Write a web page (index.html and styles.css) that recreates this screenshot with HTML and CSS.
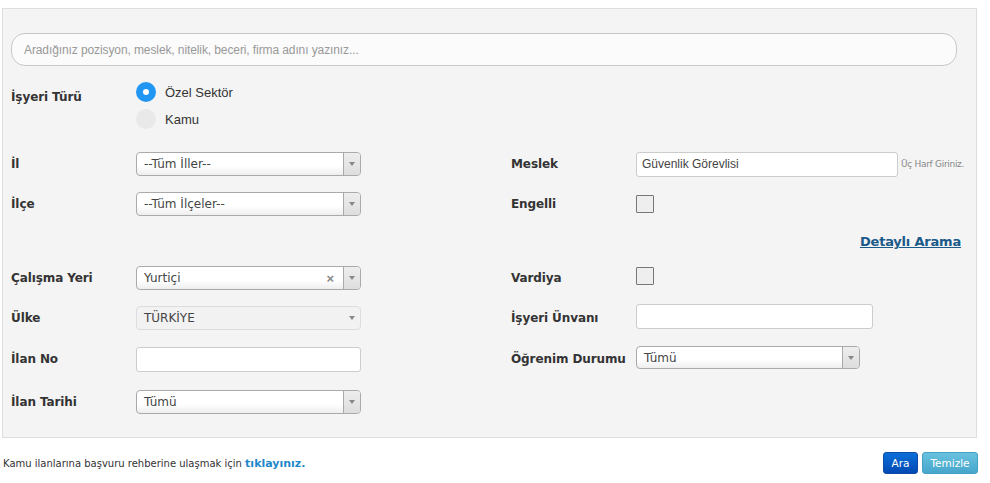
FILE: index.html
```html
<!DOCTYPE html>
<html lang="tr">
<head>
<meta charset="utf-8">
<link rel="stylesheet" href="styles.css">
</head>
<body>
<div class="page">
  <div class="panel">
    <input class="search" type="text" placeholder="Aradığınız pozisyon, meslek, nitelik, beceri, firma adını yazınız...">
    <div class="type-row">
      <div class="label">İşyeri Türü</div>
      <div class="radios">
        <div class="radio-item"><span class="radio checked"></span><span>Özel Sektör</span></div>
        <div class="radio-item"><span class="radio"></span><span>Kamu</span></div>
      </div>
    </div>
    <div class="form">
      <div class="label r1 c1">İl</div>
      <div class="select r1 c2"><span class="val">--Tüm İller--</span><span class="arrow"><i></i></span></div>
      <div class="label r1 c3">Meslek</div>
      <div class="r1 c4 meslek"><div class="input w262"><span class="val dark">Güvenlik Görevlisi</span></div><span class="hint">Üç Harf Giriniz.</span></div>

      <div class="label r2 c1">İlçe</div>
      <div class="select r2 c2"><span class="val">--Tüm İlçeler--</span><span class="arrow"><i></i></span></div>
      <div class="label r2 c3">Engelli</div>
      <div class="r2 c4"><span class="check"></span></div>

      <div class="r3 detail"><a href="#">Detaylı Arama</a></div>

      <div class="label r4 c1">Çalışma Yeri</div>
      <div class="select r4 c2"><span class="val">Yurtiçi</span><span class="clear">×</span><span class="arrow"><i></i></span></div>
      <div class="label r4 c3">Vardiya</div>
      <div class="r4 c4 up"><span class="check"></span></div>

      <div class="label r5 c1">Ülke</div>
      <div class="select disabled r5 c2"><span class="val">TÜRKİYE</span><span class="arrow"><i></i></span></div>
      <div class="label r5 c3">İşyeri Ünvanı</div>
      <div class="r5 c4 up2"><div class="input w237"></div></div>

      <div class="label r6 c1">İlan No</div>
      <div class="r6 c2"><div class="input w225"></div></div>
      <div class="label r6 c3">Öğrenim Durumu</div>
      <div class="select w224 r6 c4 up2"><span class="val">Tümü</span><span class="arrow"><i></i></span></div>

      <div class="label r7 c1">İlan Tarihi</div>
      <div class="select r7 c2"><span class="val">Tümü</span><span class="arrow"><i></i></span></div>
    </div>
  </div>
  <div class="footer">
    <p class="note">Kamu ilanlarına başvuru rehberine ulaşmak için <a href="#">tıklayınız.</a></p>
    <div class="buttons">
      <button class="btn primary">Ara</button>
      <button class="btn info">Temizle</button>
    </div>
  </div>
</div>
</body>
</html>
```
FILE: styles.css
```css
html, body { margin: 0; padding: 0; }
body {
  width: 990px;
  height: 483px;
  overflow: hidden;
  background: #ffffff;
  font-family: "Liberation Sans", Arial, sans-serif;
  color: #333;
}
.page { padding: 8px 0 0 2px; }
.panel {
  box-sizing: border-box;
  width: 975px;
  height: 430px;
  background: #f4f4f4;
  border: 1px solid #dedede;
  padding: 24px 0 0 8px;
}
.search {
  display: block;
  box-sizing: border-box;
  width: 946px;
  height: 33px;
  border: 1px solid #c8c8c8;
  border-radius: 14px;
  background: #fbfbfb;
  padding: 0 12px;
  font-family: "Liberation Sans", Arial, sans-serif;
  font-size: 12px;
  letter-spacing: -0.1px;
  color: #555;
  outline: none;
}
.search::placeholder { color: #999; }

.label {
  font-family: "DejaVu Sans", Verdana, sans-serif;
  font-weight: bold;
  font-size: 12px;
  color: #333;
  letter-spacing: -0.1px;
}
.type-row {
  display: flex;
  margin-top: 16px;
}
.type-row .label { width: 125px; padding-top: 8px; }
.radios { display: flex; flex-direction: column; gap: 7px; }
.radio-item {
  display: flex;
  align-items: center;
  gap: 9px;
  font-size: 13px;
  color: #333;
}
.radio {
  box-sizing: border-box;
  width: 20px;
  height: 20px;
  border-radius: 50%;
  background: #e9e9e9;
}
.radio.checked {
  border: 7px solid #2196f3;
  background-color: #fff;
}

.form {
  display: grid;
  grid-template-columns: 125px 375px 125px 340px;
  grid-template-rows: 40px 39px 36px 38px 41px 42px 43px;
  align-items: center;
  margin-top: 15px;
}
.r1 { grid-row: 1; } .r2 { grid-row: 2; } .r3 { grid-row: 3; } .r4 { grid-row: 4; }
.r5 { grid-row: 5; } .r6 { grid-row: 6; } .r7 { grid-row: 7; }
.c1 { grid-column: 1; } .c2 { grid-column: 2; } .c3 { grid-column: 3; } .c4 { grid-column: 4; }
.up { margin-top: -4px; }
.up2 { margin-top: -3px; }

.select {
  position: relative;
  box-sizing: border-box;
  width: 225px;
  height: 24px;
  border: 1px solid #aaa;
  border-radius: 4px;
  background: linear-gradient(to bottom, #fff 0%, #fff 60%, #eee 100%);
  display: flex;
  align-items: center;
  font-family: "DejaVu Sans", Verdana, sans-serif;
  font-size: 12px;
  color: #444;
}
.select.w224 { width: 224px; height: 23px; }
.select .val { padding-left: 7px; flex: 1; letter-spacing: 0; }
.select .arrow {
  width: 16px;
  align-self: stretch;
  border-left: 1px solid #aaa;
  border-radius: 0 3px 3px 0;
  background: linear-gradient(to bottom, #eee 0%, #ddd 100%);
  display: flex;
  align-items: center;
  justify-content: center;
}
.select .arrow i {
  width: 0; height: 0;
  border-left: 3px solid transparent;
  border-right: 3px solid transparent;
  border-top: 4px solid #888;
}
.select .clear { font-size: 13px; color: #888; margin-right: 9px; font-family: "Liberation Sans", Arial, sans-serif; font-weight: bold; }
.select.disabled {
  border-color: #ddd;
  background: #f2f2f2;
  color: #444;
}
.select.disabled .arrow { border-left: none; background: none; }

.input {
  box-sizing: border-box;
  height: 25px;
  border: 1px solid #ccc;
  border-radius: 3px;
  background: #fff;
  display: flex;
  align-items: center;
}
.w262 { width: 262px; }
.w237 { width: 237px; }
.w225 { width: 225px; }
.input .val { padding-left: 5px; font-size: 12px; color: #444; }
.meslek { display: flex; align-items: center; gap: 3px; }
.hint { font-size: 9px; color: #888; font-family: "DejaVu Sans", Verdana, sans-serif; letter-spacing: -0.3px; }
.check {
  display: block;
  box-sizing: border-box;
  width: 18px;
  height: 18px;
  border: 1px solid #777;
  border-radius: 1px;
  background: #eee;
}
.detail {
  grid-column: 3 / 5;
  justify-self: end;
  margin-right: 15px;
}
.detail a {
  font-family: "DejaVu Sans", Verdana, sans-serif;
  font-weight: bold;
  font-size: 13px;
  color: #1a5a8a;
  text-decoration: underline;
  letter-spacing: -0.2px;
}

.footer {
  display: flex;
  align-items: center;
  justify-content: space-between;
  width: 975px;
  margin-left: 1px;
  height: 46px;
  padding-top: 4px;
  box-sizing: border-box;
}
.note {
  margin: 0;
  font-family: "DejaVu Sans", Verdana, sans-serif;
  font-size: 10px;
  color: #333;
  letter-spacing: 0;
}
.note a {
  color: #1f88c8;
  font-weight: bold;
  font-size: 11px;
  letter-spacing: 0;
  text-decoration: none;
}
.buttons { display: flex; gap: 4px; }
.btn {
  height: 22px;
  border-radius: 3px;
  font-family: "DejaVu Sans", Verdana, sans-serif;
  font-size: 10.5px;
  color: #fff;
  padding: 0;
  cursor: pointer;
}
.btn.primary {
  width: 35px;
  background: linear-gradient(to bottom, #0b6fd8 0%, #0049b4 100%);
  border: 1px solid #0d4ba5;
}
.btn.info {
  width: 56px;
  background: linear-gradient(to bottom, #68c2de 0%, #46a6cb 100%);
  border: 1px solid #45a0c4;
}
```
